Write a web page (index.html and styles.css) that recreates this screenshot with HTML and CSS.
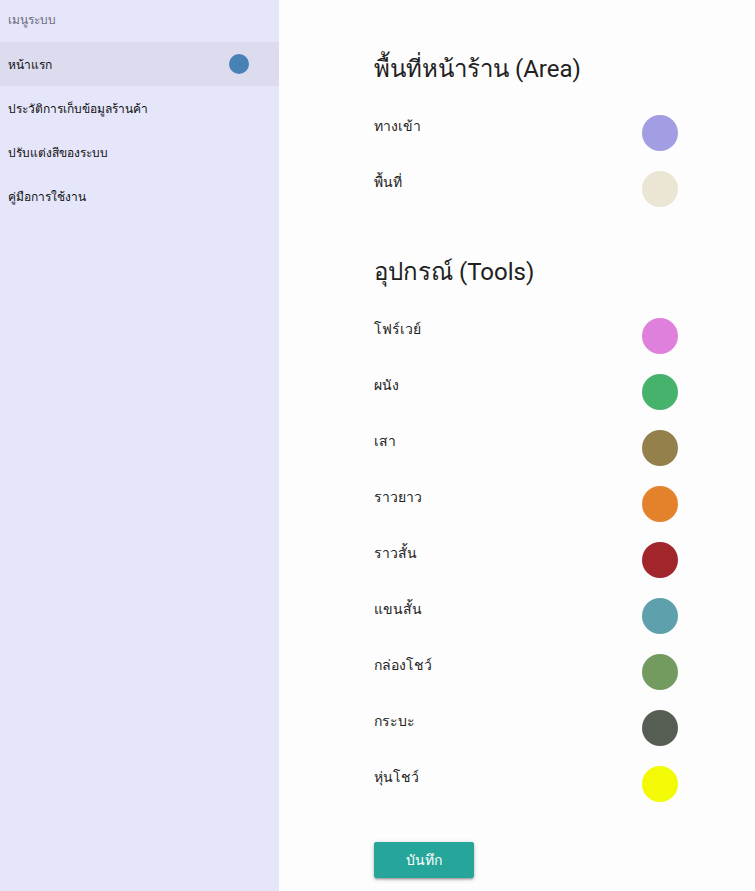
FILE: index.html
```html
<!DOCTYPE html>
<html lang="th">
<head>
<meta charset="utf-8">
<title>ปรับแต่งสีของระบบ</title>
<link rel="stylesheet" href="styles.css">
</head>
<body>
<div class="app">
  <aside class="sidebar">
    <div class="menu-title">เมนูระบบ</div>
    <div class="menu-item active"><span>หน้าแรก</span><span class="dot"></span></div>
    <div class="menu-item"><span>ประวัติการเก็บข้อมูลร้านค้า</span></div>
    <div class="menu-item"><span>ปรับแต่งสีของระบบ</span></div>
    <div class="menu-item"><span>คู่มือการใช้งาน</span></div>
  </aside>
  <main class="main">
    <div class="content">
      <h2 class="section-title">พื้นที่หน้าร้าน (Area)</h2>
      <div class="row"><span class="label">ทางเข้า</span><span class="swatch" style="background:#a39de3"></span></div>
      <div class="row"><span class="label">พื้นที่</span><span class="swatch" style="background:#ebe5d3"></span></div>

      <h2 class="section-title second">อุปกรณ์ (Tools)</h2>
      <div class="row"><span class="label">โฟร์เวย์</span><span class="swatch" style="background:#de80dc"></span></div>
      <div class="row"><span class="label">ผนัง</span><span class="swatch" style="background:#47b26b"></span></div>
      <div class="row"><span class="label">เสา</span><span class="swatch" style="background:#93804a"></span></div>
      <div class="row"><span class="label">ราวยาว</span><span class="swatch" style="background:#e3822b"></span></div>
      <div class="row"><span class="label">ราวสั้น</span><span class="swatch" style="background:#a1252b"></span></div>
      <div class="row"><span class="label">แขนสั้น</span><span class="swatch" style="background:#5fa0ad"></span></div>
      <div class="row"><span class="label">กล่องโชว์</span><span class="swatch" style="background:#739b5f"></span></div>
      <div class="row"><span class="label">กระบะ</span><span class="swatch" style="background:#565d52"></span></div>
      <div class="row"><span class="label">หุ่นโชว์</span><span class="swatch" style="background:#f2fb05"></span></div>

      <button class="save-btn">บันทึก</button>
    </div>
  </main>
</div>
</body>
</html>
```

FILE: styles.css
```css
html, body {
  margin: 0;
  padding: 0;
  height: 100%;
}
body {
  font-family: Roboto, "Noto Sans", "DejaVu Sans", sans-serif;
  background: #fdfdfd;
  color: #212121;
}
.app {
  display: flex;
  min-height: 891px;
}
.sidebar {
  width: 279px;
  flex: 0 0 279px;
  background: #e6e6fa;
}
.menu-title {
  height: 42px;
  line-height: 40px;
  padding-left: 8px;
  font-size: 12px;
  color: #6b6b7a;
}
.menu-item {
  height: 44px;
  display: flex;
  align-items: center;
  justify-content: space-between;
  padding: 0 30px 0 8px;
  font-size: 12px;
  color: #111;
}
.menu-item.active {
  background: #dcdcee;
}
.dot {
  width: 20px;
  height: 20px;
  border-radius: 50%;
  background: #4682b4;
}
.main {
  flex: 1;
  padding: 53px 0 0 95px;
}
.content {
  width: 304px;
}
.section-title {
  margin: 0 0 30px;
  font-size: 24px;
  line-height: 32px;
  font-weight: 400;
  color: #212121;
}
.section-title.second {
  margin-top: 49px;
}
.row {
  display: flex;
  justify-content: space-between;
  align-items: flex-start;
  margin-bottom: 20px;
}
.label {
  font-size: 14px;
  line-height: 22px;
  color: #222;
}
.swatch {
  width: 36px;
  height: 36px;
  border-radius: 50%;
}
.save-btn {
  display: block;
  margin-top: 40px;
  width: 100px;
  height: 36px;
  border: none;
  border-radius: 2px;
  background: #26a69a;
  color: #fff;
  font-family: Roboto, "Noto Sans", sans-serif;
  font-size: 14px;
  box-shadow: 0 2px 2px rgba(0,0,0,0.14), 0 3px 1px -2px rgba(0,0,0,0.12), 0 1px 5px rgba(0,0,0,0.2);
  cursor: pointer;
}
```
